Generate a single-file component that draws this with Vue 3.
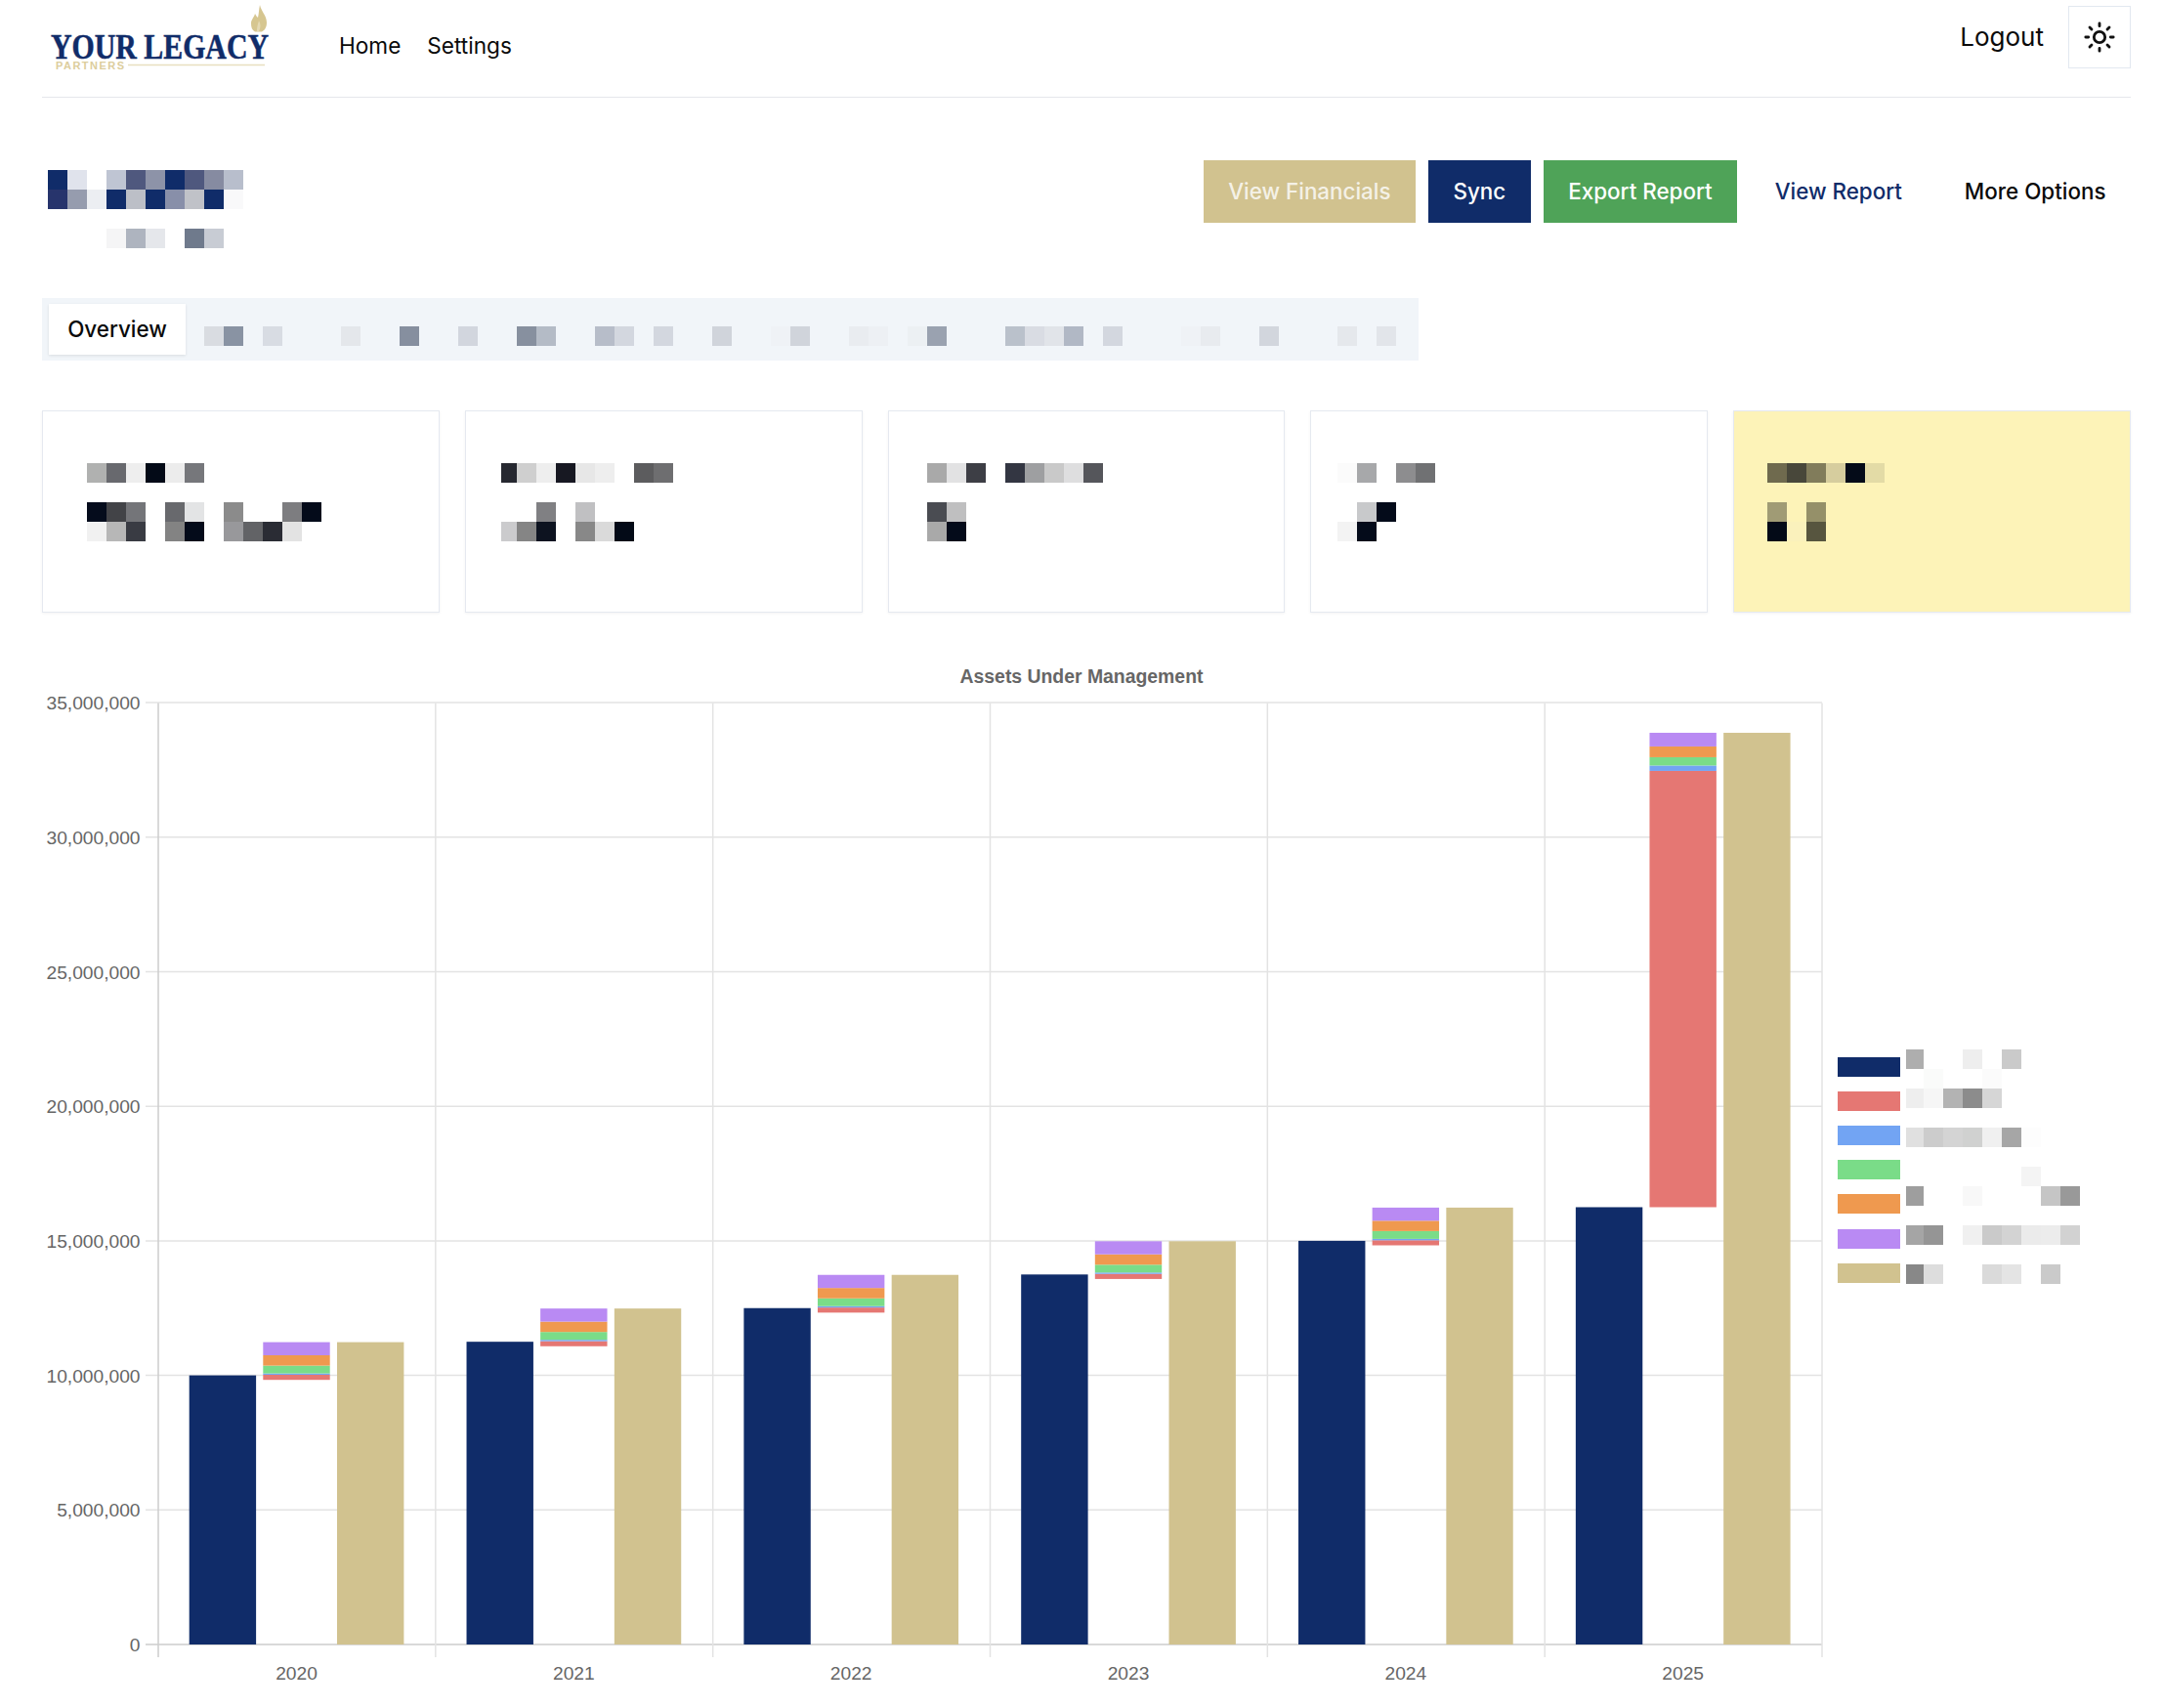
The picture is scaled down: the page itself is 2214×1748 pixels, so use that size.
<script setup>
const e = ''
const titleRows = [
  ['#102c69','#e0e3ec',e,'#bfc5d3','#4f587e','#8d93a8','#102c69','#4f587e','#868ba1','#b8becc'],
  ['#27346c','#969cae','#eceef2','#102c69','#bcbfc7','#102c69','#888fa9','#c0c2c8','#102c69','#f9f9fa'],
  [],
  [e,e,e,'#f5f5f6','#aeb4bf','#e5e7eb',e,'#6f7a8c','#c8ccd4'],
]

const tabCells = {0:'#d9dce1',1:'#8993a3',3:'#d8dce3',7:'#e4e7eb',10:'#868f9f',13:'#d2d6de',16:'#87909f',17:'#b4bbc6',20:'#b7bdc9',21:'#d3d7df',23:'#d3d7df',26:'#d0d4db',29:'#eff2f6',30:'#d0d4db',33:'#e9ecf0',34:'#edf0f4',36:'#ecf0f3',37:'#9aa2b0',41:'#bac1cb',42:'#d9dce3',43:'#e1e4e9',44:'#b1b8c5',46:'#d3d7df',50:'#eff2f6',51:'#e8ebef',54:'#d2d6dd',58:'#e5e8ec',60:'#e2e5ea'}
const tabRow = [Array.from({length:61},(_,i)=>tabCells[i]||e)]

const cards = [
  {left:44.5,rows:[
    ['#b0b1b0','#68696e','#eeeeee','#030a17','#ececec','#76777b'],
    [],
    ['#050c1c','#424347','#747579',e,'#68696d','#e3e4e5',e,'#8b8b8b',e,e,'#7d7d80','#040b1a'],
    ['#f1f1f1','#b7b7b7','#393b43',e,'#838383','#040b1a',e,'#98989b','#626366','#2a2c34','#e3e3e3'],
  ]},
  {left:36.5,trim:true,rows:[
    ['#262830','#cfcfcf','#eeeeee','#171822','#e7e7e7','#eeeeee',e,'#5c5c5e','#6e6e70'],
    [],
    [e,e,'#808083',e,'#c0c0c2'],
    ['#cbcbcd','#858585','#0d1320',e,'#888888','#dadada','#030a17'],
  ]},
  {left:39.7,rows:[
    ['#a9a9a9','#e2e2e3','#3d3e45',e,'#333642','#9e9fa1','#c9c9c9','#dededf','#55565b'],
    [],
    ['#4a4c52','#bfbfc0'],
    ['#a9a9a9','#040b1a'],
  ]},
  {left:26.9,rows:[
    ['#fbfbfb','#a7a8aa',e,'#8d8d8f','#707173'],
    [],
    [e,'#c8c9cb','#040b1a'],
    ['#f3f3f3','#040b1a'],
  ]},
  {left:34.1,hot:true,rows:[
    ['#6f6a4e','#48473a','#817c5b','#d6cd9e','#040b18','#e3dba6'],
    [],
    ['#a09b75',e,'#959069'],
    ['#030a17','#faf1bc','#57553f'],
  ]},
]

// chart, in page pixels minus the svg origin (43, 660)
const ox = 43, oy = 660
const plot = {left:162-ox, right:1865-ox, top:719.5-oy, zero:1683-oy}
const perMillion = 27.54
const groupW = (plot.right-plot.left)/6
const yFor = v => plot.zero - v*perMillion

const navy='#102c69', red='#e57773', blue='#72a4f3', green='#7adc88', orange='#ef994f', purple='#b98af3', gold='#d1c28f'

const yTicks = [0,5,10,15,20,25,30,35].map(m=>({y:yFor(m),label:m===0?'0':m+',000,000'}))
const vLines = [0,1,2,3,4,5,6].map(i=>plot.left+i*groupW)

const years = [
  {year:2020,start:10,end:11.235},
  {year:2021,start:11.25,end:12.485},
  {year:2022,start:12.5,end:13.735},
  {year:2023,start:13.75,end:14.985},
  {year:2024,start:15,end:16.235},
  {year:2025,start:16.25,end:33.88},
]

const barW = 68.4
function bars(y,i){
  const x0 = 193.7-ox+i*groupW
  const s = yFor(y.start), t = yFor(y.end)
  const out = [
    {x:x0,y:s,h:plot.zero-s,c:navy},
    {x:x0+151.3,y:t,h:plot.zero-t,c:gold},
  ]
  const x1 = x0+75.6
  if(i===5){
    out.push({x:x1,y:t+39,h:s-t-39,c:red},{x:x1,y:t+33.5,h:5.5,c:blue},{x:x1,y:t+25,h:8.5,c:green},{x:x1,y:t+14,h:11,c:orange},{x:x1,y:t,h:14,c:purple})
  } else {
    out.push({x:x1,y:s-0.6,h:5.2,c:red},{x:x1,y:s-2,h:1.4,c:blue},{x:x1,y:s-10,h:8,c:green},{x:x1,y:s-20.6,h:10.6,c:orange},{x:x1,y:t,h:s-20.6-t,c:purple})
  }
  return out
}
const allBars = years.flatMap((y,i)=>bars(y,i))

const legendY = [1082,1117,1152,1187,1222,1258,1293].map(v=>v-oy)
const legendColors = [navy,red,blue,green,orange,purple,gold]

const legendCells = [
  [1074,{0:'#aeaeae',3:'#eeeeee',5:'#cacaca'}],
  [1094,{1:'#fafbfa',4:'#fbfbfb'}],
  [1114,{0:'#eeeeee',1:'#f6f6f6',2:'#b3b3b3',3:'#8c8c8c',4:'#d6d6d6'}],
  [1154,{0:'#e0e0e0',1:'#cccccc',2:'#d4d4d4',3:'#d0d1d0',4:'#f0f0f0',5:'#a6a6a6',6:'#fdfdfd'}],
  [1194,{6:'#f4f4f4'}],
  [1214,{0:'#9e9e9e',3:'#f8f8f8',7:'#c5c5c5',8:'#999999'}],
  [1254,{0:'#a5a5a5',1:'#959595',3:'#f0f0f0',4:'#cacaca',5:'#d3d3d3',6:'#ebebeb',7:'#ececec',8:'#d2d2d2'}],
  [1294,{0:'#888888',1:'#dddddd',4:'#dadada',5:'#e4e4e4',7:'#cacaca'}],
].flatMap(([y,row])=>Object.keys(row).map(k=>({
  x:(+k===0?1951:1949+(+k)*20)-ox,
  w:+k===0?18:20,
  y:y-oy,
  c:row[k],
})))
</script>

<template>
  <div class="page">
    <header class="topbar">
      <svg class="logo" width="280" height="80" viewBox="43 0 280 80">
        <path d="M266 5C267 11 273 16 273 23C273 28 271 31 268 32.500L261 32.500C258 31 257 28 257 24C257 20 260 18 261 14C262 16 263 17 264 18C265 14 265 9 266 5Z" fill="#d6c690"/>
        <path d="M265 32C267 28 267 25 265 21C264 25 263 27 263 32Z" fill="#e4d9b4"/>
        <text x="52" y="60" class="logo-main" textLength="223" lengthAdjust="spacingAndGlyphs">YOUR LEGACY</text>
        <text x="57" y="71" class="logo-sub" textLength="70" lengthAdjust="spacing">PARTNERS</text>
        <line x1="131" y1="66.5" x2="271" y2="66.5" stroke="#e8dfc0" stroke-width="1.5"/>
      </svg>
      <nav class="nav">
        <a>Home</a>
        <a>Settings</a>
      </nav>
      <div class="account">
        <a class="logout">Logout</a>
        <button class="theme">
          <svg width="34" height="34" viewBox="0 0 24 24" fill="none" stroke="#111" stroke-width="2" stroke-linecap="round">
            <circle cx="12" cy="12" r="4"/>
            <path d="M12 2v2M12 20v2M4.93 4.93l1.41 1.41M17.66 17.66l1.41 1.41M2 12h2M20 12h2M6.34 17.66l-1.41 1.41M19.07 4.93l-1.41 1.41"/>
          </svg>
        </button>
      </div>
    </header>

    <section class="title-row">
      <div class="mosaic title-mosaic">
        <div v-for="(row,r) in titleRows" :key="r" class="m-row">
          <span v-for="(c,i) in row" :key="i" class="cell" :style="{background:c||'transparent'}"></span>
        </div>
      </div>
      <div class="actions">
        <button class="btn gold">View Financials</button>
        <button class="btn navy">Sync</button>
        <button class="btn green">Export Report</button>
        <button class="btn link">View Report</button>
        <button class="btn plain">More Options</button>
      </div>
    </section>

    <div class="tabs">
      <div class="tab">Overview</div>
      <div class="mosaic tab-mosaic">
        <div v-for="(row,r) in tabRow" :key="r" class="m-row">
          <span v-for="(c,i) in row" :key="i" class="cell" :style="{background:c||'transparent'}"></span>
        </div>
      </div>
    </div>

    <section class="cards">
      <div v-for="(card,n) in cards" :key="n" class="card" :class="{hot:card.hot}" :style="{paddingLeft:card.left+'px'}">
        <div class="mosaic" :class="{trim:card.trim}">
          <div v-for="(row,r) in card.rows" :key="r" class="m-row">
            <span v-for="(c,i) in row" :key="i" class="cell" :style="{background:c||'transparent'}"></span>
          </div>
        </div>
      </div>
    </section>

    <svg class="chart" width="2138" height="1080" viewBox="0 0 2138 1080">
      <text :x="1107-ox" y="38.5" class="chart-title" text-anchor="middle">Assets Under Management</text>

      <line v-for="t in yTicks" :key="t.label" :x1="plot.left-13" :x2="plot.right" :y1="t.y" :y2="t.y" :stroke="t.label==='0'?'#cccccc':'#e3e3e3'" stroke-width="1.5"/>
      <line v-for="(x,i) in vLines" :key="i" :x1="x" :x2="x" :y1="plot.top" :y2="plot.zero+13" :stroke="i===0?'#cccccc':'#e3e3e3'" stroke-width="1.5"/>

      <text v-for="t in yTicks" :key="'l'+t.label" :x="143.5-ox" :y="t.y+7" class="tick" text-anchor="end">{{ t.label }}</text>
      <text v-for="(y,i) in years" :key="y.year" :x="plot.left+groupW*(i+0.5)-0.4" :y="1719-oy" class="tick" text-anchor="middle">{{ y.year }}</text>

      <rect v-for="(b,i) in allBars" :key="i" :x="b.x" :y="b.y" :width="barW" :height="b.h" :fill="b.c"/>

      <rect v-for="(c,i) in legendColors" :key="c" :x="1881-ox" :y="legendY[i]" width="64" height="20" :fill="c"/>
      <rect v-for="(c,i) in legendCells" :key="'c'+i" :x="c.x" :y="c.y" :width="c.w" height="20" :fill="c.c"/>
    </svg>
  </div>
</template>

<style scoped>
.page{
  box-sizing: border-box;
  width: 2214px;
  padding: 0 33px 0 43px;
  font-family: Inter, "Liberation Sans", sans-serif;
  color: #0a0a0a;
}
.topbar{
  display: flex;
  align-items: flex-start;
  box-sizing: border-box;
  height: 100px;
  border-bottom: 1.5px solid #e5e7eb;
}
.logo{
  display: block;
}
.logo-main{
  font-family: "Liberation Serif", serif;
  font-weight: 700;
  font-size: 35px;
  fill: #102c69;
  stroke: #102c69;
  stroke-width: .5px;
}
.logo-sub{
  font-family: "Liberation Sans", sans-serif;
  font-weight: 700;
  font-size: 11px;
  fill: #dccd9c;
}
.nav{
  display: flex;
  gap: 27px;
  margin-left: 24px;
  margin-top: 33px;
  font-size: 22.6px;
  line-height: 28px;
}
.account{
  display: flex;
  align-items: center;
  gap: 25px;
  margin-left: auto;
  padding-top: 6px;
}
.logout{
  margin-bottom: 2px;
  font-size: 26px;
}
.theme{
  display: flex;
  align-items: center;
  justify-content: center;
  box-sizing: border-box;
  width: 64px;
  height: 64px;
  padding: 0;
  background: #fff;
  border: 1.5px solid #e2e8f0;
}
.title-row{
  display: flex;
  justify-content: space-between;
  align-items: flex-start;
  padding-top: 64px;
}
.title-mosaic{
  margin-left: 6px;
  margin-top: 10px;
}
.actions{
  display: flex;
  gap: 13px;
}
.btn{
  height: 64px;
  padding: 0 25.5px 2px;
  border: none;
  background: transparent;
  font-family: inherit;
  font-size: 22.4px;
  font-weight: 500;
}
.gold{
  background: #d1c28f;
  color: rgba(255,255,255,.8);
}
.navy{
  background: #102c69;
  color: #fff;
}
.green{
  background: #4fa358;
  color: #fff;
}
.link{
  color: #102c69;
}
.plain{
  color: #0a0a0a;
}
.mosaic{
  display: flex;
  flex-direction: column;
}
.m-row{
  display: flex;
  height: 20px;
}
.cell{
  display: block;
  flex: none;
  width: 20px;
  height: 20px;
}
.trim .cell:first-child{
  width: 16px;
}
.tabs{
  display: flex;
  box-sizing: border-box;
  width: 1409px;
  height: 64px;
  margin-top: 51px;
  padding: 6px 7px;
  background: #f1f5f9;
}
.tab{
  box-sizing: border-box;
  width: 140px;
  height: 52px;
  background: #fff;
  box-shadow: 0 1px 3px rgba(0,0,0,.1);
  font-size: 22.4px;
  font-weight: 500;
  line-height: 52px;
  text-align: center;
}
.tab-mosaic{
  margin-left: 19px;
  margin-top: 23px;
}
.cards{
  display: grid;
  grid-template-columns: repeat(5, 1fr);
  gap: 26px;
  margin-top: 51px;
}
.card{
  box-sizing: border-box;
  height: 207px;
  padding-top: 52.5px;
  background: #fff;
  border: 1.5px solid #e5e9f0;
  box-shadow: 0 1px 3px rgba(0,0,0,.05);
}
.hot{
  background: #fdf3b8;
}
.chart{
  display: block;
  margin-top: 33px;
}
.chart-title{
  font-family: "Liberation Sans", sans-serif;
  font-weight: 700;
  font-size: 19.4px;
  fill: #666;
}
.tick{
  font-family: "Liberation Sans", sans-serif;
  font-size: 19.2px;
  fill: #666;
}
</style>

<style>
html,body{
  background: #fff;
}
</style>
